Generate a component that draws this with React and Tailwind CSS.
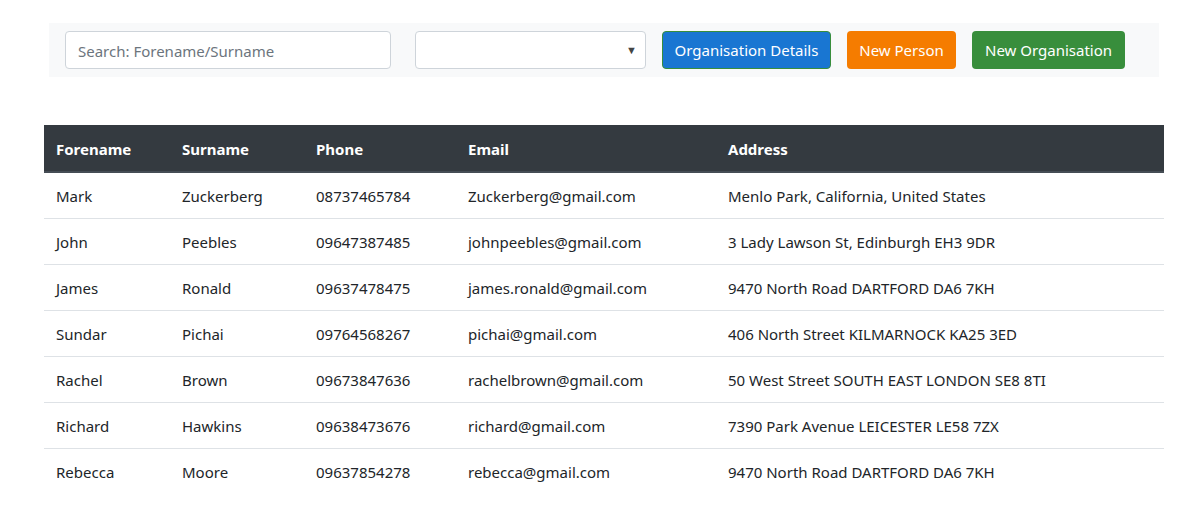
import React from 'react';

const people = [
  { forename: 'Mark', surname: 'Zuckerberg', phone: '08737465784', email: 'Zuckerberg@gmail.com', address: 'Menlo Park, California, United States' },
  { forename: 'John', surname: 'Peebles', phone: '09647387485', email: 'johnpeebles@gmail.com', address: '3 Lady Lawson St, Edinburgh EH3 9DR' },
  { forename: 'James', surname: 'Ronald', phone: '09637478475', email: 'james.ronald@gmail.com', address: '9470 North Road DARTFORD DA6 7KH' },
  { forename: 'Sundar', surname: 'Pichai', phone: '09764568267', email: 'pichai@gmail.com', address: '406 North Street KILMARNOCK KA25 3ED' },
  { forename: 'Rachel', surname: 'Brown', phone: '09673847636', email: 'rachelbrown@gmail.com', address: '50 West Street SOUTH EAST LONDON SE8 8TI' },
  { forename: 'Richard', surname: 'Hawkins', phone: '09638473676', email: 'richard@gmail.com', address: '7390 Park Avenue LEICESTER LE58 7ZX' },
  { forename: 'Rebecca', surname: 'Moore', phone: '09637854278', email: 'rebecca@gmail.com', address: '9470 North Road DARTFORD DA6 7KH' },
];

export default function App() {
  return (
    <div className="min-h-[529px] bg-white text-[#212529] text-[15px]" style={{ fontFamily: '"Noto Sans", "Open Sans", sans-serif' }}>
      <div className="pt-[23px] px-[44px]">
        {/* Toolbar */}
        <div className="ml-[5px] mr-[-1px] w-[1110px] h-[54px] bg-[#f8f9fa] flex items-center px-4 gap-4">
          <input
            type="text"
            placeholder="Search: Forename/Surname"
            className="w-[326px] h-[38px] border border-[#ced4da] rounded px-3 pt-px text-[15px] placeholder:text-[#6c757d] bg-white outline-none"
          />
          <div className="ml-2 relative w-[231px] h-[38px] border border-[#ced4da] rounded bg-white">
            <span className="absolute right-[8px] top-[10px] text-[11px] text-[#444]">▼</span>
          </div>
          <button className="h-[38px] w-[169px] bg-[#1976d2] border border-[#388e3c] rounded text-white text-[15px]">Organisation Details</button>
          <button className="h-[38px] w-[109px] bg-[#f57c00] rounded text-white text-[15px]">New Person</button>
          <button className="h-[38px] w-[153px] bg-[#388e3c] rounded text-white text-[15px]">New Organisation</button>
        </div>

        {/* Table */}
        <table className="mt-[48px] w-[1120px] border-collapse table-fixed">
          <colgroup>
            <col className="w-[126px]" />
            <col className="w-[134px]" />
            <col className="w-[152px]" />
            <col className="w-[260px]" />
            <col />
          </colgroup>
          <thead>
            <tr className="bg-[#343a40] text-white h-[47px] border-b-2 border-[#454d55]">
              <th className="text-left font-bold px-3 pt-[2px]">Forename</th>
              <th className="text-left font-bold px-3 pt-[2px]">Surname</th>
              <th className="text-left font-bold px-3 pt-[2px]">Phone</th>
              <th className="text-left font-bold px-3 pt-[2px]">Email</th>
              <th className="text-left font-bold px-3 pt-[2px]">Address</th>
            </tr>
          </thead>
          <tbody>
            {people.map((p, i) => (
              <tr key={i} className={`h-[46px] ${i < people.length - 1 ? 'border-b border-[#dee2e6]' : ''}`}>
                <td className="px-3 pt-[2px]">{p.forename}</td>
                <td className="px-3 pt-[2px]">{p.surname}</td>
                <td className="px-3 pt-[2px]">{p.phone}</td>
                <td className="px-3 pt-[2px]">{p.email}</td>
                <td className="px-3 pt-[2px]">{p.address}</td>
              </tr>
            ))}
          </tbody>
        </table>
      </div>
    </div>
  );
}
